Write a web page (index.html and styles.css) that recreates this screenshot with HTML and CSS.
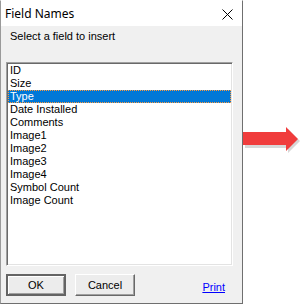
FILE: index.html
```html
<!DOCTYPE html>
<html lang="en">
<head>
    <meta charset="UTF-8">
    <title>Field Names</title>
    <link rel="stylesheet" href="styles.css">
</head>
<body>
    <div class="window">
        <!-- Title Bar -->
        <div class="title-bar">
            <span class="title">Field Names</span>
            <svg class="close" width="11" height="11" viewBox="0 0 11 11">
                <path d="M0.5 0.5 L10.5 10.5 M10.5 0.5 L0.5 10.5" stroke="#000" stroke-width="1" fill="none"/>
            </svg>
        </div>

        <div class="dialog-body">
            <div class="label">Select a field to insert</div>

            <!-- Field List -->
            <div class="listbox">
                <div class="item">ID</div>
                <div class="item">Size</div>
                <div class="item selected">Type</div>
                <div class="item">Date Installed</div>
                <div class="item">Comments</div>
                <div class="item">Image1</div>
                <div class="item">Image2</div>
                <div class="item">Image3</div>
                <div class="item">Image4</div>
                <div class="item">Symbol Count</div>
                <div class="item">Image Count</div>
            </div>

            <!-- Buttons -->
            <div class="footer">
                <button class="btn default">OK</button>
                <button class="btn">Cancel</button>
                <a class="print-link" href="#">Print</a>
            </div>
        </div>
    </div>

    <!-- Red Arrow -->
    <svg class="arrow" width="60" height="26" viewBox="0 0 60 26">
        <polygon points="2,7 45,7 45,2 57,14 45,26 45,21 2,21" fill="#b0b0b0" opacity="0.5"/>
        <polygon points="0,5 43,5 43,0 55,12 43,24 43,18 0,18" fill="#f03c3c"/>
    </svg>
</body>
</html>
```

FILE: styles.css
```css
/* Reset */
* {
    margin: 0;
    padding: 0;
    box-sizing: border-box;
}
body {
    background-color: #ffffff;
    font-family: 'Liberation Sans', Arial, sans-serif;
    font-size: 11px;
    color: #000000;
    width: 304px;
    height: 305px;
    overflow: hidden;
    position: relative;
}
.window {
    width: 243px;
    height: 304px;
    border: 1px solid #6f6f6f;
    border-top-color: #ffffff;
    border-left-color: #9a9a9a;
    display: flex;
    flex-direction: column;
    background-color: #f0f0f0;
}
.title-bar {
    height: 25px;
    background-color: #ffffff;
    display: flex;
    align-items: center;
    justify-content: space-between;
    padding: 0 9px 0 4px;
}
.title {
    font-family: 'Noto Sans', sans-serif;
    font-size: 12px;
    line-height: 16px;
}
.close {
    display: block;
    margin-top: 1px;
}
.dialog-body {
    flex: 1;
    display: flex;
    flex-direction: column;
    padding: 4px 0 0 5px;
}
.label {
    line-height: 13px;
    padding-left: 4px;
}
.listbox {
    width: 227px;
    height: 204px;
    margin-top: 19px;
    background-color: #ffffff;
    border-style: solid;
    border-width: 1px;
    border-color: #a0a0a0 #ffffff #ffffff #a0a0a0;
    box-shadow: inset 1px 1px 0 #696969, inset -1px -1px 0 #e3e3e3;
    padding: 1px;
}
.item {
    height: 13px;
    line-height: 13px;
    padding-left: 2px;
    white-space: nowrap;
}
.item.selected {
    background-color: #0078d7;
    color: #ffffff;
    outline: 1px dotted #ff9a3c;
    outline-offset: -1px;
}
.footer {
    display: flex;
    align-items: center;
    gap: 9px;
    margin-top: 8px;
}
.btn {
    width: 60px;
    height: 22px;
    font-family: 'Liberation Sans', Arial, sans-serif;
    font-size: 11px;
    background-color: #ececec;
    border-style: solid;
    border-width: 1px;
    border-color: #ffffff #696969 #696969 #ffffff;
    box-shadow: inset -1px -1px 0 #a0a0a0;
    color: #000000;
}
.btn.default {
    border: 1px solid #646464;
    box-shadow: inset 1px 1px 0 #646464, inset -1px -1px 0 #646464, inset 2px 2px 0 #ffffff, inset -2px -2px 0 #a0a0a0;
}
.print-link {
    margin-left: auto;
    margin-right: 17px;
    margin-top: 4px;
    color: #0000ff;
    text-decoration: underline;
}

/* Annotation arrow */
.arrow {
    position: absolute;
    left: 243px;
    top: 127px;
}
```
